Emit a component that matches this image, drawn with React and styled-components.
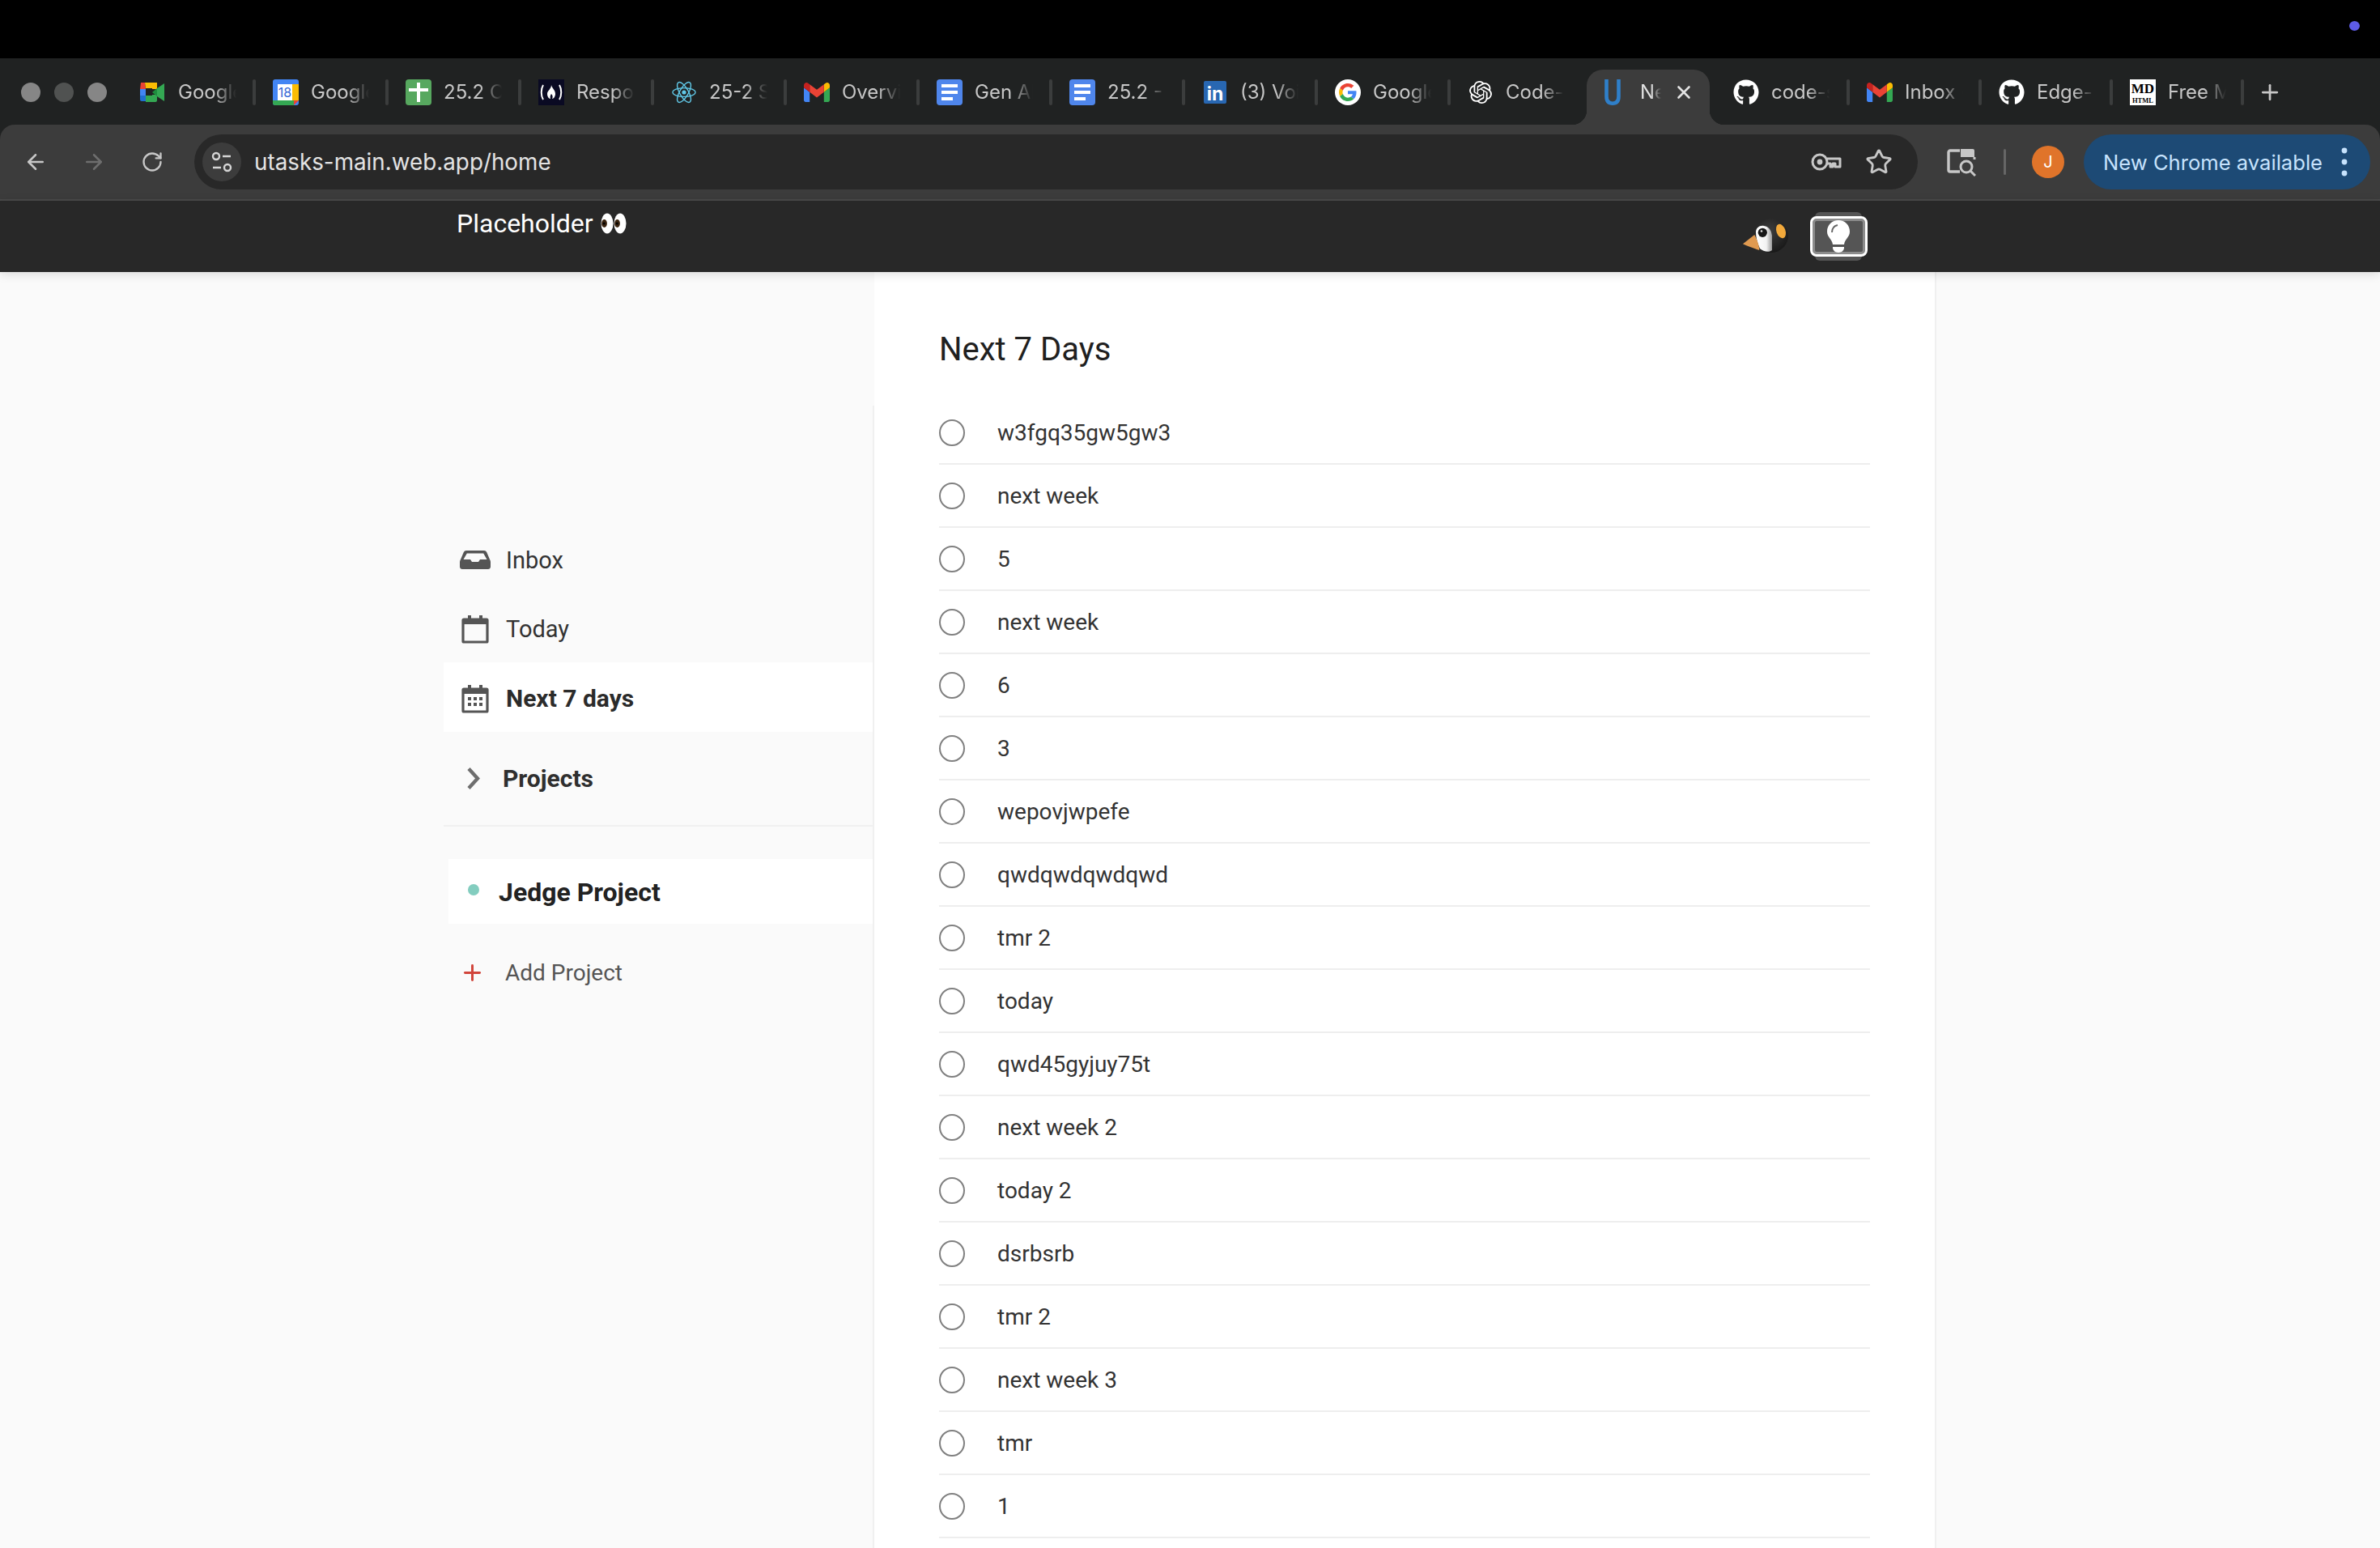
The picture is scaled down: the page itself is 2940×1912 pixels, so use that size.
import React from "react";
import styled, { createGlobalStyle } from "styled-components";
import { ArrowLeft, ArrowRight, RotateCw, Star, X, Plus } from "lucide-react";
import { FaGithub } from "react-icons/fa";
import { SiOpenai } from "react-icons/si";

const Global = createGlobalStyle`
  html, body { margin: 0; padding: 0; background: #fafafa; overflow: hidden; }
  * { box-sizing: border-box; }
`;

const Page = styled.div`
  width: 2940px;
  height: 1912px;
  display: flex;
  flex-direction: column;
  overflow: hidden;
  font-family: Roboto, "Liberation Sans", sans-serif;
`;

const MenuBar = styled.div`
  height: 72px;
  flex: none;
  background: #000;
  display: flex;
  justify-content: flex-end;
  align-items: flex-start;
  padding: 26px 25px 0 0;
`;
const StatusDot = styled.span`
  width: 13px;
  height: 12px;
  border-radius: 50%;
  background: #5e5ce6;
`;

const TabStrip = styled.div`
  height: 82px;
  flex: none;
  display: flex;
  background: #202222;
  padding-top: 14px;
  font-family: Inter, "Liberation Sans", sans-serif;
`;
const Lights = styled.div`
  width: 149px;
  flex: none;
  display: flex;
  gap: 17px;
  padding: 16px 0 0 26px;
`;
const Light = styled.span`
  width: 24px;
  height: 24px;
  border-radius: 50%;
  background: ${p => (p.$dim ? "#505251" : "#868686")};
`;
const Tab = styled.div`
  width: ${p => p.$w || 164}px;
  flex: none;
  height: 68px;
  display: flex;
  align-items: flex-start;
  padding: 12px 0 0 24px;
  color: #c7c7c7;
  font-size: 24px;
  line-height: 32px;
`;
const Title = styled.span`
  width: 72px;
  margin-left: 15px;
  white-space: nowrap;
  overflow: hidden;
  -webkit-mask-image: linear-gradient(to right, #000 62%, transparent 100%);
  mask-image: linear-gradient(to right, #000 62%, transparent 100%);
`;
const TabRule = styled.span`
  width: 4px;
  height: 32px;
  margin: 0 -3px 0 auto;
  border-radius: 2px;
  background: #3b3d3d;
  flex: none;
`;
const ActiveTab = styled.div`
  position: relative;
  width: 152px;
  height: 68px;
  flex: none;
  margin: 0 5px 0 7px;
  background: #3c3c3c;
  border-radius: 20px 20px 0 0;
  display: flex;
  align-items: flex-start;
  padding: 12px 0 0 22px;
  color: #e3e3e3;
  font-size: 24px;
  line-height: 32px;
  &::before, &::after {
    content: "";
    position: absolute;
    bottom: 0;
    width: 18px;
    height: 18px;
  }
  &::before {
    left: -18px;
    background: radial-gradient(circle at 0 0, transparent 18px, #3c3c3c 18.5px);
  }
  &::after {
    right: -18px;
    background: radial-gradient(circle at 100% 0, transparent 18px, #3c3c3c 18.5px);
  }
`;
const ActiveTitle = styled.span`
  width: 26px;
  margin-left: 24px;
  white-space: nowrap;
  overflow: hidden;
  -webkit-mask-image: linear-gradient(to right, #000 50%, transparent 100%);
  mask-image: linear-gradient(to right, #000 50%, transparent 100%);
`;
const TabClose = styled.span`
  margin-left: 15px;
  display: flex;
  align-items: center;
  height: 32px;
  color: #e3e3e3;
`;
const NewTab = styled.span`
  margin-left: 20px;
  height: 32px;
  margin-top: 12px;
  display: flex;
  align-items: center;
  color: #c7c7c7;
`;
const Fav = styled.svg`
  width: 32px;
  height: 32px;
  flex: none;
  display: block;
`;
const UGlyph = styled.svg`
  width: 20px;
  height: 32px;
  flex: none;
  display: block;
`;
const GitFav = styled(FaGithub)`
  width: 32px;
  height: 32px;
  flex: none;
  color: #fff;
`;
const AiFav = styled(SiOpenai)`
  width: 28px;
  height: 32px;
  margin: 0 2px;
  flex: none;
  color: #fff;
`;

const Toolbar = styled.div`
  height: 94px;
  flex: none;
  display: flex;
  align-items: center;
  background: #3c3c3c;
  border-bottom: 2px solid #4a4a4a;
  border-radius: 18px 18px 0 0;
  padding-left: 8px;
  font-family: Inter, "Liberation Sans", sans-serif;
`;
const ToolbarBacking = styled.div`
  background: #202222;
  flex: none;
`;
const NavSlot = styled.span`
  width: 72px;
  display: flex;
  justify-content: center;
  color: ${p => (p.$off ? "#6e6e6e" : "#c7c7c7")};
`;
const Address = styled.div`
  width: 2129px;
  height: 68px;
  margin-left: 16px;
  flex: none;
  border-radius: 34px;
  background: #282828;
  display: flex;
  align-items: center;
  padding: 0 31px 0 10px;
`;
const SiteChip = styled.span`
  width: 48px;
  height: 48px;
  border-radius: 50%;
  background: #3c3c3c;
  display: flex;
  align-items: center;
  justify-content: center;
  flex: none;
`;
const Url = styled.span`
  margin-left: 16px;
  font-size: 27.8px;
  color: #e3e3e3;
  flex: 1;
`;
const AddressIcons = styled.div`
  display: flex;
  align-items: center;
  gap: 29px;
  color: #c7c7c7;
`;
const SidePanel = styled.svg`
  width: 36px;
  height: 36px;
  margin-left: 36px;
  flex: none;
`;
const ToolRule = styled.span`
  width: 3px;
  height: 32px;
  margin-left: 34px;
  border-radius: 2px;
  background: #666;
  flex: none;
`;
const Avatar = styled.span`
  width: 40px;
  height: 40px;
  margin-left: 32px;
  border-radius: 50%;
  background: #e0742a;
  color: #fff;
  font-size: 20px;
  display: flex;
  align-items: center;
  justify-content: center;
  flex: none;
`;
const UpdatePill = styled.div`
  width: 354px;
  height: 68px;
  margin-left: 24px;
  border-radius: 34px;
  background: #1d4a75;
  color: #c7e3fd;
  font-size: 25.6px;
  display: flex;
  align-items: center;
  justify-content: space-between;
  padding: 0 28px 0 24px;
  flex: none;
`;
const PillDots = styled.svg`
  width: 8px;
  height: 36px;
  flex: none;
`;

const AppHeader = styled.header`
  height: 88px;
  flex: none;
  position: relative;
  z-index: 2;
  background: #282828;
  box-shadow: 0 2px 12px rgba(0, 0, 0, 0.14);
  display: flex;
  align-items: flex-start;
  padding: 8px 634px 0 564px;
`;
const Brand = styled.div`
  display: flex;
  align-items: center;
  gap: 9px;
  color: #fff;
  font-size: 32px;
  line-height: 40px;
`;
const Eyes = styled.svg`
  width: 32px;
  height: 26px;
  flex: none;
`;
const HeaderTools = styled.div`
  margin-left: auto;
  display: flex;
  align-items: center;
  height: 72px;
  gap: 27px;
`;
const Mascot = styled.svg`
  width: 56px;
  height: 46px;
  flex: none;
`;
const BulbCap = styled.div`
  width: 58px;
  height: 60px;
  border-radius: 6px;
  background: #555;
  display: flex;
  align-items: center;
  justify-content: center;
  margin: 0 6px;
`;
const BulbButton = styled.div`
  width: 71px;
  height: 50px;
  flex: none;
  border: 3px solid #fff;
  border-radius: 8px;
  background: #555;
  box-shadow: inset 0 0 0 3px #8c8c8c;
  display: flex;
  align-items: center;
  justify-content: center;
`;

const Body = styled.main`
  flex: 1;
  display: flex;
  min-height: 0;
  background: #fafafa;
  padding-left: 548px;
`;
const Sidebar = styled.aside`
  width: 532px;
  flex: none;
  padding-top: 165px;
  display: flex;
`;
const SideInner = styled.div`
  flex: 1;
  border-right: 2px solid #f0f0f0;
  padding-top: 147px;
  color: #333;
  font-size: 29px;
`;
const NavRow = styled.div`
  height: ${p => (p.$active ? 86 : 85)}px;
  display: flex;
  align-items: center;
  padding: 3px 0 0 ${p => p.$indent || 20}px;
  background: ${p => (p.$active ? "#fff" : "transparent")};
  font-weight: ${p => (p.$active ? 700 : 400)};
  font-size: ${p => (p.$active ? 30 : 29)}px;
  color: ${p => (p.$active ? "#2b2b2b" : "#333")};
`;
const NavIcon = styled.svg`
  width: 38px;
  height: 38px;
  flex: none;
  margin-right: 19px;
`;
const ProjectsRow = styled.div`
  height: 117px;
  padding: 16px 0 0 28px;
  margin-bottom: 40px;
  display: flex;
  align-items: flex-start;
  border-bottom: 2px solid #f0f0f0;
  font-weight: 700;
  font-size: 30px;
  color: #2f2f2f;
  line-height: 84px;
`;
const Chevron = styled.svg`
  width: 17px;
  height: 29px;
  margin: 27px 28px 0 0;
  flex: none;
`;
const ProjectRow = styled.div`
  margin-left: 6px;
  height: 80px;
  background: #fff;
  display: flex;
  align-items: center;
  padding: 2px 0 0 24px;
  font-size: 32px;
  font-weight: 700;
  color: #222;
`;
const ProjectDot = styled.span`
  width: 14px;
  height: 14px;
  border-radius: 50%;
  background: #83cdbf;
  flex: none;
  margin: -6px 24px 0 0;
`;
const AddRow = styled.div`
  height: 118px;
  display: flex;
  align-items: center;
  padding: 3px 0 0 20px;
  font-size: 28px;
  color: #555;
`;
const AddPlus = styled(Plus)`
  width: 31px;
  height: 31px;
  color: #d1453b;
  margin-right: 25px;
  flex: none;
`;

const Content = styled.section`
  width: 1312px;
  flex: none;
  background: #fff;
  border-right: 2px solid #f0f0f0;
  padding: 72px 80px 0;
`;
const Heading = styled.h1`
  margin: 0 0 40px;
  font-size: 40px;
  line-height: 48px;
  font-weight: 400;
  color: #202020;
`;
const TaskList = styled.ul`
  list-style: none;
  margin: 0;
  padding: 0;
`;
const TaskRow = styled.li`
  height: 78px;
  display: flex;
  align-items: center;
  border-bottom: 2px solid #eeeeee;
  font-size: 28px;
  color: #333;
`;
const Circle = styled.span`
  width: 32px;
  height: 33px;
  border-radius: 50%;
  border: 2px solid #808080;
  flex: none;
  margin-right: 40px;
`;

const Meet = () => (
  <Fav viewBox="0 0 32 32">
    <path fill="#4285f4" d="M0 12h7v8H0z" />
    <path fill="#ea4335" d="M6 4H1L0 12h7z" />
    <path fill="#fbbc04" d="M6 4h15v8h-6V11H7z" />
    <path fill="#1f6fd0" d="M0 20h7v7H2a2 2 0 0 1-2-2z" />
    <path fill="#34a853" d="M7 20h8v-1h6v7a2 2 0 0 1-2 2H7z" />
    <path fill="#1e8e3e" d="M15 16l6-5v10z" />
    <path fill="#34a853" d="M21 11l9-6v22l-9-6z" />
  </Fav>
);
const Calendar = () => (
  <Fav viewBox="0 0 32 32">
    <rect width="32" height="32" rx="3" fill="#4285f4" />
    <path fill="#fbbc04" d="M24 6h8v20h-8z" />
    <path fill="#34a853" d="M0 26h26v6H3a3 3 0 0 1-3-3z" />
    <path fill="#ea4335" d="M26 26h6l-6 6z" />
    <rect x="6" y="6" width="18" height="20" fill="#fff" />
    <text x="15" y="22" textAnchor="middle" fontFamily="Inter, sans-serif" fontSize="16" fill="#3367d6">18</text>
  </Fav>
);
const Sheets = () => (
  <Fav viewBox="0 0 32 32">
    <rect width="32" height="32" rx="4" fill="#57a85f" />
    <path fill="#fff" d="M14 4h4v7h10v4H18v13h-4V15H4v-4h10z" />
  </Fav>
);
const Fcc = () => (
  <Fav viewBox="0 0 32 32">
    <rect width="32" height="32" fill="#0a0a23" />
    <path fill="none" stroke="#fff" strokeWidth="2" d="M6 7c-3 5-3 13 0 18M26 7c3 5 3 13 0 18" />
    <path fill="#fff" d="M16 7c1 4 5 6 5 11 0 3-2 6-4 6 1-2 1-4-1-6-1 2-2 3-1 6-2 0-4-3-4-6 0-4 5-6 5-11z" />
  </Fav>
);
const ReactFav = () => (
  <Fav viewBox="0 0 32 32" fill="none" stroke="#61c9e8" strokeWidth="1.4">
    <ellipse cx="16" cy="16" rx="14" ry="5.4" />
    <ellipse cx="16" cy="16" rx="14" ry="5.4" transform="rotate(60 16 16)" />
    <ellipse cx="16" cy="16" rx="14" ry="5.4" transform="rotate(120 16 16)" />
    <circle cx="16" cy="16" r="2.6" fill="#61c9e8" stroke="none" />
  </Fav>
);
const Gmail = () => (
  <Fav viewBox="0 -3 24 24">
    <path fill="#4285F4" d="M1.6 18H5.4V8.8L0 4.7V16.4c0 .9.7 1.6 1.6 1.6z" />
    <path fill="#34A853" d="M18.6 18h3.8c.9 0 1.6-.7 1.6-1.6V4.7l-5.4 4.1" />
    <path fill="#FBBC04" d="M18.6 1.7v7.1L24 4.7V2.5c0-2-2.3-3.2-3.9-2" />
    <path fill="#EA4335" d="M5.4 8.8V1.7L12 6.6l6.6-5V8.8L12 13.8" />
    <path fill="#C5221F" d="M0 2.5v2.2l5.4 4.1V1.7L3.9.5C2.3-.7 0 .5 0 2.5" />
  </Fav>
);
const Docs = () => (
  <Fav viewBox="0 0 32 32">
    <rect width="32" height="32" rx="4" fill="#4f86ec" />
    <path fill="#fff" d="M6 6h20v4H6zM6 14h20v4H6zM6 22h14v4H6z" />
  </Fav>
);
const Linked = () => (
  <Fav viewBox="0 0 32 32">
    <rect x="2" y="2" width="28" height="28" rx="2" fill="#2867b2" />
    <text x="16" y="26" textAnchor="middle" fontFamily="Inter, sans-serif" fontWeight="700" fontSize="23" fill="#fff">in</text>
  </Fav>
);
const GoogleG = () => (
  <Fav viewBox="0 0 32 32">
    <circle cx="16" cy="16" r="16" fill="#fff" />
    <g transform="translate(5 5) scale(.458)">
      <path fill="#EA4335" d="M24 9.5c3.54 0 6.71 1.22 9.21 3.6l6.85-6.85C35.9 2.38 30.47 0 24 0 14.62 0 6.51 5.38 2.56 13.22l7.98 6.19C12.43 13.72 17.74 9.5 24 9.5z" />
      <path fill="#4285F4" d="M46.98 24.55c0-1.57-.15-3.09-.38-4.55H24v9.02h12.94c-.58 2.96-2.26 5.48-4.78 7.18l7.73 6c4.51-4.18 7.09-10.36 7.09-17.65z" />
      <path fill="#FBBC05" d="M10.53 28.59c-.48-1.45-.76-2.99-.76-4.59s.27-3.14.76-4.59l-7.98-6.19C.92 16.46 0 20.12 0 24c0 3.88.92 7.54 2.56 10.78l7.97-6.19z" />
      <path fill="#34A853" d="M24 48c6.48 0 11.93-2.13 15.89-5.81l-7.73-6c-2.15 1.45-4.92 2.3-8.16 2.3-6.26 0-11.57-4.22-13.47-9.91l-7.98 6.19C6.51 42.62 14.62 48 24 48z" />
    </g>
  </Fav>
);
const UFav = () => (
  <UGlyph viewBox="0 0 20 32">
    <path fill="none" stroke="#2f7fc9" strokeWidth="4.6" d="M2.500 0v21c0 6 2.500 8.700 7.500 8.700s7.500-2.700 7.500-8.700V0" />
  </UGlyph>
);
const MdFav = () => (
  <Fav viewBox="0 0 32 32">
    <rect width="32" height="32" fill="#fff" />
    <text x="16" y="17" textAnchor="middle" fontFamily="Liberation Serif, serif" fontWeight="700" fontSize="17" fill="#000">MD</text>
    <text x="16" y="29" textAnchor="middle" fontFamily="Liberation Serif, serif" fontWeight="700" fontSize="8.5" fill="#000">HTML</text>
  </Fav>
);

const tabsBefore = [
  [Meet, "Google"], [Calendar, "Google"], [Sheets, "25.2 Co"], [Fcc, "Respon"], [ReactFav, "25-2 Sp"],
  [Gmail, "Overvie"], [Docs, "Gen AI"], [Docs, "25.2 - "], [Linked, "(3) Voi"], [GoogleG, "Google"], [AiFav, "Code-"],
];
const tabsAfter = [
  [GitFav, "code-s", 165], [Gmail, "Inbox (", 163], [GitFav, "Edge-", 162], [MdFav, "Free M", 162],
];
const tasks = [
  "w3fgq35gw5gw3", "next week", "5", "next week", "6", "3", "wepovjwpefe", "qwdqwdqwdqwd", "tmr 2",
  "today", "qwd45gyjuy75t", "next week 2", "today 2", "dsrbsrb", "tmr 2", "next week 3", "tmr", "1",
];

export default function App() {
  return (
    <Page>
      <Global />
      <MenuBar><StatusDot /></MenuBar>
      <TabStrip>
        <Lights><Light /><Light $dim /><Light /></Lights>
        {tabsBefore.map(([Icon, label], i) => (
          <Tab key={i}>
            <Icon />
            <Title>{label}</Title>
            {i < tabsBefore.length - 1 && <TabRule />}
          </Tab>
        ))}
        <ActiveTab>
          <UFav />
          <ActiveTitle>Next</ActiveTitle>
          <TabClose><X size={26} strokeWidth={2.4} /></TabClose>
        </ActiveTab>
        {tabsAfter.map(([Icon, label, w], i) => (
          <Tab key={i} $w={w}>
            <Icon />
            <Title>{label}</Title>
            <TabRule />
          </Tab>
        ))}
        <NewTab><Plus size={30} strokeWidth={2.2} /></NewTab>
      </TabStrip>
      <ToolbarBacking>
        <Toolbar>
          <NavSlot><ArrowLeft size={30} strokeWidth={2} /></NavSlot>
          <NavSlot $off><ArrowRight size={30} strokeWidth={2} /></NavSlot>
          <NavSlot><RotateCw size={28} strokeWidth={2} /></NavSlot>
          <Address>
            <SiteChip>
              <svg width="26" height="26" viewBox="0 0 26 26" fill="none" stroke="#d5d5d5" strokeWidth="2.4">
                <circle cx="6" cy="6" r="4" />
                <path d="M14 6h10M2 20h10" />
                <circle cx="20" cy="20" r="4" />
              </svg>
            </SiteChip>
            <Url>utasks-main.web.app/home</Url>
            <AddressIcons>
              <svg width="38" height="24" viewBox="0 0 38 24" fill="none" stroke="#c7c7c7" strokeWidth="3">
                <circle cx="11" cy="12" r="9" />
                <circle cx="11" cy="12" r="3.4" fill="#c7c7c7" stroke="none" />
                <path d="M20 8h16v10h-6v-4h-3v4h-3v-4h-5" strokeLinejoin="round" />
              </svg>
              <Star size={34} strokeWidth={2} />
            </AddressIcons>
          </Address>
          <SidePanel viewBox="0 0 36 36" fill="none">
            <path d="M16 4H4a2 2 0 0 0-2 2v22a2 2 0 0 0 2 2h12" stroke="#c7c7c7" strokeWidth="3.4" />
            <path d="M17 2h15a2 2 0 0 1 2 2v8H17z" fill="#c7c7c7" />
            <path d="M34 12v3" stroke="#c7c7c7" strokeWidth="3" />
            <circle cx="24" cy="24" r="7" stroke="#c7c7c7" strokeWidth="3" />
            <path d="M29 29l6 6" stroke="#c7c7c7" strokeWidth="3" />
          </SidePanel>
          <ToolRule />
          <Avatar>J</Avatar>
          <UpdatePill>
            New Chrome available
            <PillDots viewBox="0 0 8 36" fill="#c7e3fd">
              <circle cx="4" cy="4" r="3.4" /><circle cx="4" cy="18" r="3.4" /><circle cx="4" cy="32" r="3.4" />
            </PillDots>
          </UpdatePill>
        </Toolbar>
      </ToolbarBacking>
      <AppHeader>
        <Brand>
          Placeholder
          <Eyes viewBox="0 0 32 26">
            <ellipse cx="8" cy="13" rx="7.5" ry="12.5" fill="#fff" />
            <ellipse cx="24" cy="13" rx="7.5" ry="12.5" fill="#fff" />
            <ellipse cx="4.5" cy="13" rx="3.4" ry="5" fill="#3a2410" />
            <ellipse cx="20.5" cy="13" rx="3.4" ry="5" fill="#3a2410" />
            <circle cx="4.2" cy="13" r="1.6" fill="#000" />
            <circle cx="20.2" cy="13" r="1.6" fill="#000" />
          </Eyes>
        </Brand>
        <HeaderTools>
          <Mascot viewBox="0 0 56 46">
            <defs>
              <radialGradient id="mascotBody" cx="45%" cy="35%" r="65%">
                <stop offset="0%" stopColor="#3d3d3d" />
                <stop offset="100%" stopColor="#191919" />
              </radialGradient>
              <linearGradient id="mascotFace" x1="0" x2="1" y1="0" y2="0">
                <stop offset="0%" stopColor="#fff" />
                <stop offset="65%" stopColor="#f2f2f2" />
                <stop offset="100%" stopColor="#9a9a9a" />
              </linearGradient>
            </defs>
            <circle cx="35" cy="22" r="21" fill="url(#mascotBody)" />
            <path d="M16 18C16 12 21 9 26 10 32 11 35 15 36 22L36 40C33 43 25 42 21 38 18 32 16 24 16 18z" fill="url(#mascotFace)" />
            <circle cx="24.300" cy="18.300" r="5.600" fill="#161616" />
            <circle cx="23" cy="16.500" r="1.300" fill="#ddd" />
            <path d="M14.300 21L0 32.300C5 35 14 38 20.300 40 20 33 17 26 14.300 21z" fill="#e09a50" />
            <ellipse cx="47" cy="16.500" rx="5.500" ry="9" transform="rotate(-20 47 16.500)" fill="#f2a93b" />
          </Mascot>
          <BulbCap>
            <BulbButton>
              <svg width="28" height="40" viewBox="0 0 28 40">
                <path fill="#fff" d="M14 0C6 0 0 6 0 14c0 7 6 9 7 16h14c1-7 7-9 7-16C28 6 22 0 14 0z" />
                <path fill="#fff" d="M7 33h14v1c0 3-3 6-7 6s-7-3-7-6z" />
                <path fill="none" stroke="#666" strokeWidth="2" d="M6 15c0-5 3-8 7-9" />
              </svg>
            </BulbButton>
          </BulbCap>
        </HeaderTools>
      </AppHeader>
      <Body>
        <Sidebar>
          <SideInner>
            <NavRow>
              <NavIcon viewBox="0 0 38 38">
                <path fill="#555" fillRule="evenodd" d="M8 7h22c1.500 0 2.500.8 3.200 2L37 18c.6 1 1 2 1 3v6c0 2-1.500 3-3 3H3c-1.500 0-3-1-3-3v-6c0-1 .4-2 1-3L4.800 9C5.500 7.800 6.500 7 8 7zm.8 3.500L4.500 18H13l2 3h8l2-3h8.500l-4.300-7.500z" />
              </NavIcon>
              Inbox
            </NavRow>
            <NavRow>
              <NavIcon viewBox="0 0 38 38">
                <path fill="none" stroke="#555" strokeWidth="3.2" d="M5 7h28a1 1 0 0 1 1 1v26a1 1 0 0 1-1 1H5a1 1 0 0 1-1-1V8a1 1 0 0 1 1-1z" />
                <path fill="#555" d="M4 8h30v5H4zM10 2h4v6h-4zM24 2h4v6h-4z" />
              </NavIcon>
              Today
            </NavRow>
            <NavRow $active>
              <NavIcon viewBox="0 0 38 38">
                <path fill="none" stroke="#555" strokeWidth="3.2" d="M5 7h28a1 1 0 0 1 1 1v26a1 1 0 0 1-1 1H5a1 1 0 0 1-1-1V8a1 1 0 0 1 1-1z" />
                <path fill="#555" d="M4 8h30v5H4zM10 2h4v6h-4zM24 2h4v6h-4zM10 17h4v4h-4zM17 17h4v4h-4zM24 17h4v4h-4zM10 24h4v4h-4zM17 24h4v4h-4zM24 24h4v4h-4z" />
              </NavIcon>
              Next 7 days
            </NavRow>
            <ProjectsRow>
              <Chevron viewBox="0 0 17 29">
                <path fill="none" stroke="#6e6e6e" strokeWidth="4.400" d="M3 2.500L14 14.500 3 26.500" />
              </Chevron>
              Projects
            </ProjectsRow>
            <ProjectRow><ProjectDot />Jedge Project</ProjectRow>
            <AddRow><AddPlus strokeWidth={2.3} />Add Project</AddRow>
          </SideInner>
        </Sidebar>
        <Content>
          <Heading>Next 7 Days</Heading>
          <TaskList>
            {tasks.map((t, i) => (
              <TaskRow key={i}><Circle />{t}</TaskRow>
            ))}
          </TaskList>
        </Content>
      </Body>
    </Page>
  );
}
